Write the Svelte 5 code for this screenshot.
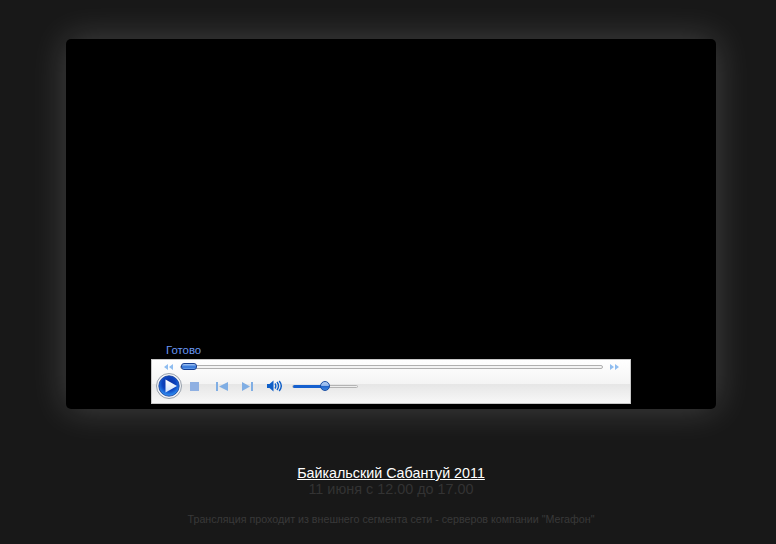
<script>
	let title = 'Байкальский Сабантуй 2011';
	let when = '11 июня с 12.00 до 17.00';
	let note = 'Трансляция проходит из внешнего сегмента сети - серверов компании "Мегафон"';
</script>

<div class="page">
	<div class="screen">
		<div class="status">Готово</div>
		<div class="player">
			<div class="seek-row">
				<svg class="skip" width="10" height="6" viewBox="0 0 10 6"><path d="M4 0v6L0 3zM9 0v6L5 3z" /></svg>
				<div class="seek">
					<div class="seek-thumb"></div>
				</div>
				<svg class="skip" width="10" height="6" viewBox="0 0 10 6"><path d="M1 0v6l4-3zM6 0v6l4-3z" /></svg>
			</div>
			<div class="controls">
				<svg class="play" width="26" height="26" viewBox="0 0 26 26">
					<defs>
						<radialGradient id="ball" cx="0.5" cy="0.38" r="0.68">
							<stop offset="0" stop-color="#0a2c9c" />
							<stop offset="0.5" stop-color="#0c44c0" />
							<stop offset="0.85" stop-color="#2f8cf0" />
							<stop offset="1" stop-color="#6fc0fa" />
						</radialGradient>
						<linearGradient id="tri" x1="0" y1="0" x2="0" y2="1">
							<stop offset="0" stop-color="#fff" />
							<stop offset="1" stop-color="#cfe0fa" />
						</linearGradient>
					</defs>
					<circle cx="13" cy="13" r="12.5" fill="#f1f3f6" stroke="#98a0ac" stroke-width="1" />
					<circle cx="13" cy="13" r="10.2" fill="url(#ball)" stroke="#123a98" stroke-width="0.8" />
					<path d="M9.500 6.500v13L21 13z" fill="url(#tri)" />
				</svg>
				<div class="stop"></div>
				<svg class="prev" width="12" height="9" viewBox="0 0 12 9"><path d="M0 0h2v9H0zM12 0v9L3 4.500z" /></svg>
				<svg class="next" width="11" height="9" viewBox="0 0 11 9"><path d="M0 0v9l8-4.500zM9 0h2v9H9z" /></svg>
				<svg class="mute" width="15" height="12" viewBox="0 0 15 12">
					<path d="M0 4h2.500L6.500 .5v11L2.500 8H0z" fill="#0f5fc8" />
					<path d="M8 3.500c1 1.500 1 3.500 0 5M10 2c1.800 2.400 1.800 5.600 0 8M12.200 1c2.500 3 2.500 7 0 10" fill="none" stroke="#0f5fc8" stroke-width="1.400" />
				</svg>
				<div class="volume">
					<div class="volume-fill"></div>
					<div class="volume-thumb"></div>
				</div>
			</div>
		</div>
	</div>

	<div class="caption">
		<a class="title" href="#top">{title}</a>
		<div class="when">{when}</div>
		<div class="note">{note}</div>
	</div>
</div>

<style>
	:global(body) {
		margin: 0;
		background: #181818;
	}
	.page {
		height: 544px;
		overflow: hidden;
		padding: 39px 0 0 6px;
		box-sizing: border-box;
		font-family: 'Liberation Sans', Arial, sans-serif;
	}
	.screen {
		width: 650px;
		height: 370px;
		margin: 0 auto;
		box-sizing: border-box;
		padding-bottom: 5px;
		background: #000;
		border-radius: 5px;
		box-shadow: 0 0 36px rgba(255, 255, 255, 0.19);
		display: flex;
		flex-direction: column;
		justify-content: flex-end;
		align-items: center;
	}
	.status {
		width: 480px;
		box-sizing: border-box;
		padding-left: 15px;
		height: 15px;
		line-height: 12px;
		font-size: 11.4px;
		color: #6a98f5;
	}
	.player {
		width: 480px;
		height: 45px;
		box-sizing: border-box;
		border: 1px solid #c8c8c8;
		background: linear-gradient(#fff 0, #f4f4f4 56%, #e6e6e6 57%, #f8f8f8 100%);
	}
	.seek-row {
		display: flex;
		align-items: center;
		height: 13px;
		padding: 0 11px 0 12px;
		gap: 6px;
	}
	.skip {
		flex: none;
		fill: #8fbdf0;
	}
	.seek {
		flex: 1;
		height: 4px;
		box-sizing: border-box;
		border: 1px solid #b0b0b0;
		border-radius: 2px;
		background: #f4f4f4;
		display: flex;
		align-items: center;
	}
	.seek-thumb {
		flex: none;
		width: 16px;
		height: 7px;
		box-sizing: border-box;
		border: 1px solid #173f92;
		border-radius: 3px;
		background: linear-gradient(#a9c9f5, #2a6fd6 60%, #6fa5ee);
	}
	.controls {
		display: flex;
		align-items: center;
		height: 26px;
		padding-left: 4px;
	}
	.play {
		flex: none;
	}
	.stop {
		flex: none;
		width: 9px;
		height: 9px;
		margin-left: 8px;
		background: #8fb0e2;
	}
	.prev {
		flex: none;
		margin-left: 17px;
		fill: #80aee4;
	}
	.next {
		flex: none;
		margin-left: 14px;
		fill: #80aee4;
	}
	.mute {
		flex: none;
		margin-left: 14px;
	}
	.volume {
		flex: none;
		position: relative;
		width: 66px;
		height: 3px;
		margin-left: 10px;
		box-sizing: border-box;
		border: 1px solid #b4b4b4;
		border-radius: 2px;
		background: #eee;
	}
	.volume-fill {
		width: 31px;
		height: 3px;
		margin-top: -1px;
		background: #1560cf;
		border-radius: 2px;
	}
	.volume-thumb {
		position: absolute;
		left: 27px;
		top: -5px;
		width: 10px;
		height: 10px;
		box-sizing: border-box;
		border: 1px solid #1a4fa5;
		border-radius: 50%;
		background: linear-gradient(#b4cff5 0, #8fb4ea 45%, #1f62c8 50%, #3f86e0 100%);
	}
	.caption {
		margin-top: 56px;
		text-align: center;
	}
	.title {
		display: block;
		width: fit-content;
		margin: 0 auto;
		font-size: 14.3px;
		line-height: 16px;
		color: #fff;
		text-decoration: underline;
	}
	.when {
		font-size: 14.4px;
		line-height: 17px;
		color: #333;
	}
	.note {
		margin-top: 14px;
		font-size: 10.7px;
		line-height: 14px;
		color: #383838;
	}
</style>
